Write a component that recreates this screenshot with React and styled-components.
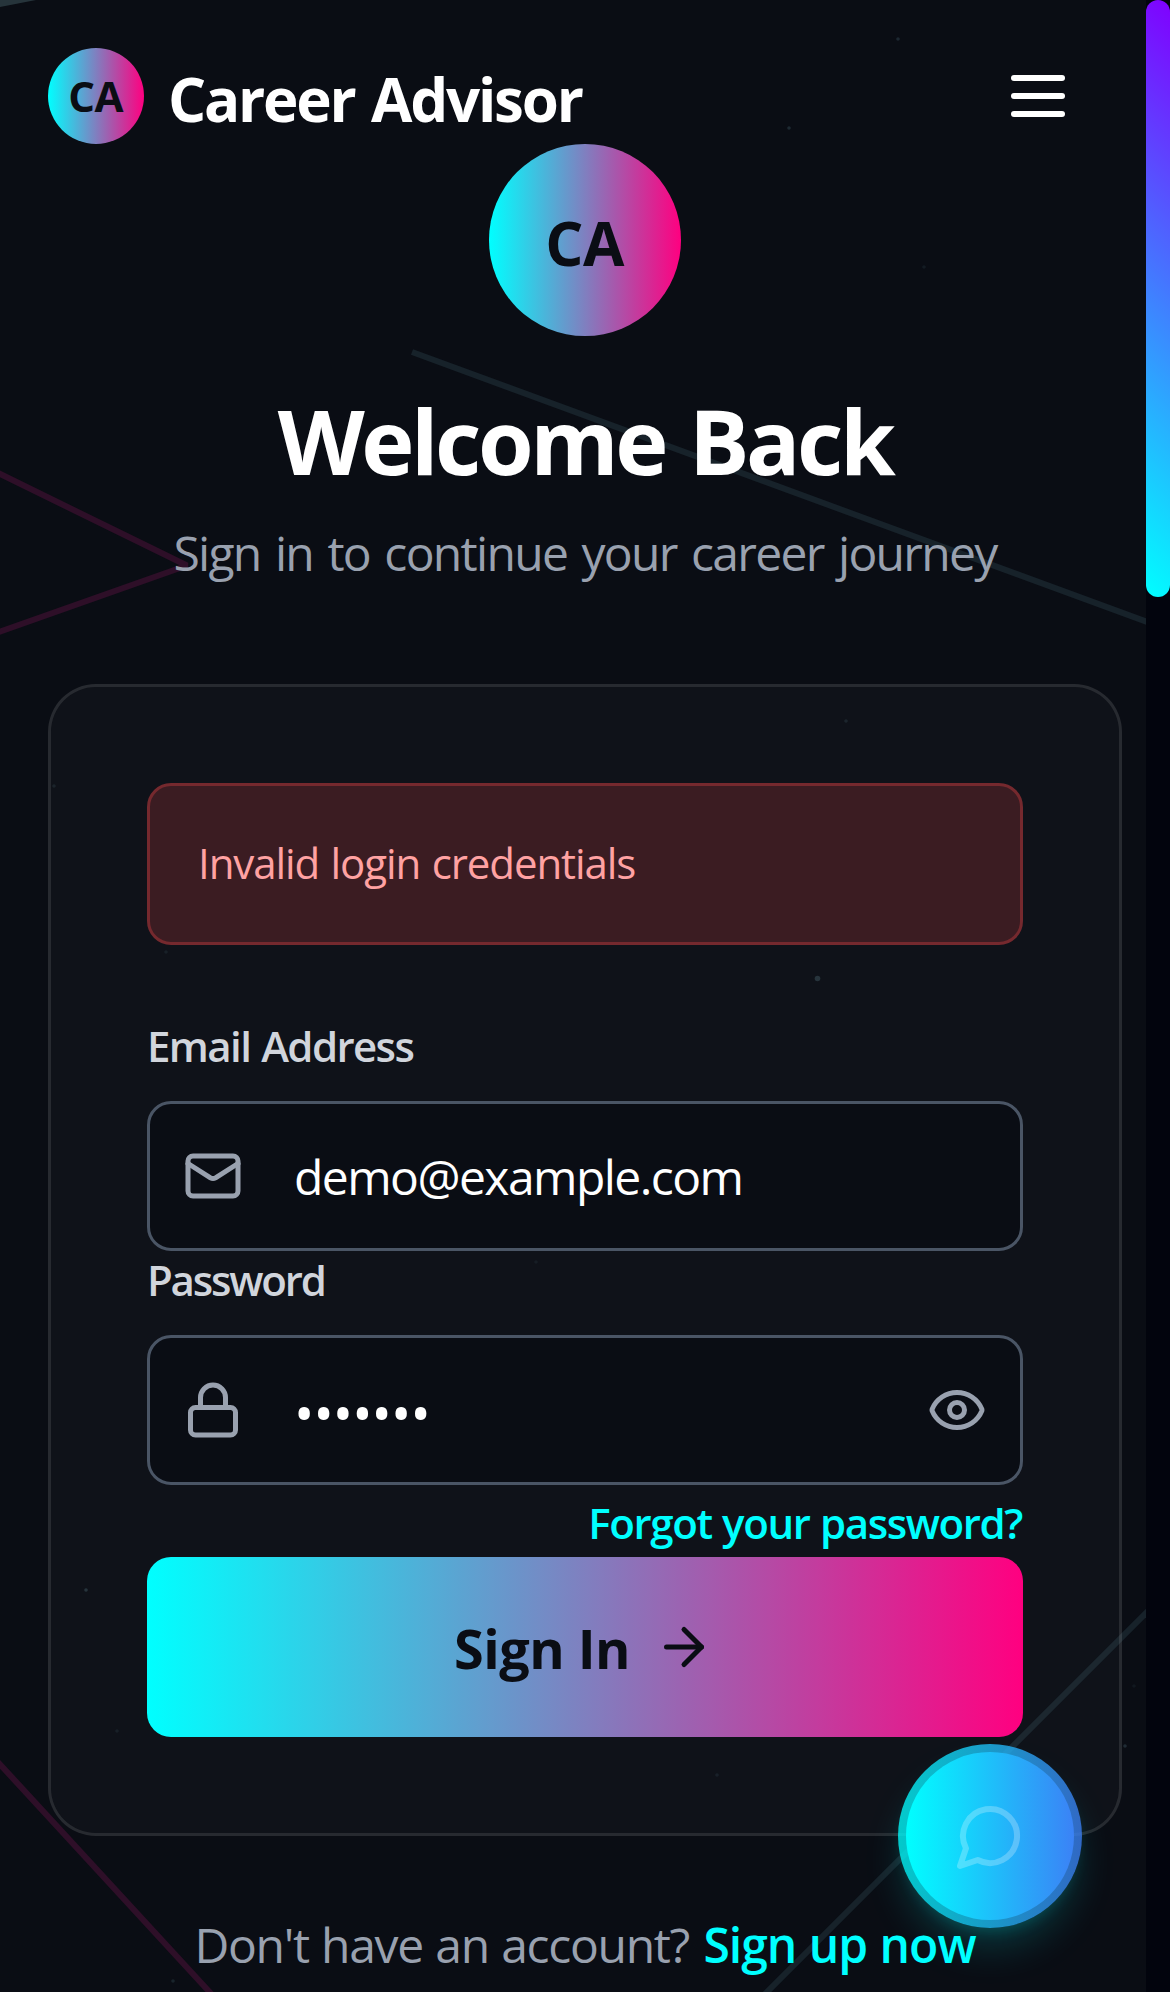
import React from "react";
import styled, { createGlobalStyle, css } from "styled-components";
import { Mail, Lock, Eye, ArrowRight } from "lucide-react";

const Global = createGlobalStyle`
  *, *::before, *::after { box-sizing: border-box; }
  html, body { margin: 0; background: #0a0d14; }
  body { overflow: hidden; font-family: "Open Sans", "Noto Sans", sans-serif; }
`;

const accent = "linear-gradient(90deg, #00ffff, #ff0080)";

const Page = styled.div`
  position: relative;
  display: flex;
  width: 1170px;
  height: 1992px;
  overflow: hidden;
  background: #0a0d14;
`;

const Backdrop = styled.svg`
  position: absolute;
  inset: 0;
  pointer-events: none;
`;

const Main = styled.div`
  position: relative;
  width: 1146px;
  flex: none;
  padding: 48px 24px 0 48px;
  display: flex;
  flex-direction: column;
  white-space: nowrap;
`;

const Header = styled.header`
  height: 96px;
  flex: none;
  display: flex;
  align-items: center;
  justify-content: space-between;
  padding-right: 57px;
`;

const Brand = styled.div`
  display: flex;
  align-items: center;
  gap: 24px;
`;

const Badge = styled.div`
  width: ${(p) => p.$size}px;
  height: ${(p) => p.$size}px;
  border-radius: 50%;
  background: ${accent};
  display: flex;
  align-items: center;
  justify-content: center;
`;

/* One line of text: size, weight, tracking, and a line box that fixes its baseline. */
const type = css`
  font-size: ${(p) => p.$size}px;
  font-weight: ${(p) => p.$weight || 400};
  letter-spacing: ${(p) => p.$track || 0}px;
  word-spacing: ${(p) => p.$words || 0}px;
  line-height: ${(p) => p.$line}px;
`;

const Initials = styled.span`
  ${type}
  color: #0a0d14;
  padding-top: ${(p) => p.$drop || 0}px;
  margin-left: -1px;
`;

const BrandName = styled.span`
  ${type}
  color: #fff;
  padding-top: 5px;
`;

const MenuButton = styled.button`
  width: 54px;
  padding: 0;
  border: 0;
  background: none;
  display: flex;
  flex-direction: column;
  gap: 12px;
`;

const MenuBar = styled.span`
  height: 6px;
  border-radius: 3px;
  background: #fff;
`;

const Intro = styled.section`
  width: 1074px;
  height: 540px;
  flex: none;
  display: flex;
  flex-direction: column;
  align-items: center;
`;

const Heading = styled.h1`
  ${type}
  margin: 50px 0 0;
  color: #fff;
`;

const Subtitle = styled.p`
  ${type}
  margin: 23px 0 0;
  color: #99a1af;
`;

const Card = styled.form`
  width: 1074px;
  height: 1152px;
  flex: none;
  padding: 96px;
  border: 3px solid rgba(255, 255, 255, 0.12);
  border-radius: 48px;
  background: rgba(255, 255, 255, 0.025);
  background-clip: padding-box;
  display: flex;
  flex-direction: column;
`;

const Alert = styled.div`
  ${type}
  height: 162px;
  flex: none;
  margin-bottom: 72px;
  padding: 0 48px 2px;
  border: 3px solid #75292e;
  border-radius: 24px;
  background: #3b1c22;
  color: #ffa2a2;
  display: flex;
  align-items: center;
`;

const Label = styled.label`
  ${type}
  height: 84px;
  color: #d1d5dc;
`;

const Field = styled.div`
  height: 150px;
  flex: none;
  padding: 0 33px;
  border: 3px solid #4a5565;
  border-radius: 24px;
  background: #0a0d14;
  color: #99a1af;
  display: flex;
  align-items: center;
  & > svg { flex: none; }
`;

const Value = styled.span`
  ${type}
  flex: 1;
  margin-left: 51px;
  padding-top: ${(p) => p.$drop || 0}px;
  color: #fff;
`;

const Forgot = styled.a`
  ${type}
  height: 72px;
  align-self: flex-end;
  padding-right: 1px;
  color: #00ffff;
`;

const Submit = styled.button`
  height: 180px;
  flex: none;
  padding: 0 2px 0 0;
  border: 0;
  border-radius: 24px;
  background: ${accent};
  color: #0a0d14;
  font-family: inherit;
  display: flex;
  align-items: center;
  justify-content: center;
  gap: 24px;
`;

const SubmitText = styled.span`
  ${type}
  padding-top: 2px;
`;

const Footer = styled.p`
  ${type}
  width: 1074px;
  margin: 73px 0 0;
  color: #99a1af;
  text-align: center;
`;

const SignUp = styled.a`
  ${type}
  margin-left: 2px;
  color: #00ffff;
`;

const ChatRing = styled.div`
  position: absolute;
  left: 898px;
  top: 1744px;
  width: 184px;
  height: 184px;
  border-radius: 50%;
  display: flex;
  align-items: center;
  justify-content: center;
  background: linear-gradient(90deg, rgba(0, 255, 255, 0.78), rgba(59, 130, 246, 0.78));
  box-shadow: 0 24px 44px -10px rgba(0, 255, 255, 0.22), 0 8px 18px -10px rgba(0, 255, 255, 0.25);
`;

const ChatButton = styled.button`
  width: 168px;
  height: 168px;
  padding: 0;
  border: 0;
  border-radius: 50%;
  background: linear-gradient(90deg, #00ffff, #3b82f6);
  display: flex;
  align-items: center;
  justify-content: center;
`;

const Track = styled.div`
  position: relative;
  width: 24px;
  flex: none;
  background: #02040d;
`;

const Thumb = styled.div`
  height: 597px;
  border-radius: 12px;
  background: linear-gradient(45deg, #00ffff, #8000ff);
`;

const stars = [
  [898, 39, 0.14], [789, 128, 0.15], [924, 267, 0.07], [54, 786, 0.09], [157, 933, 0.1],
  [166, 952, 0.07], [846, 721, 0.1], [817.5, 978.5, 0.18], [707, 1127, 0.1], [536, 1262, 0.06],
  [86, 1590, 0.18], [117, 1731, 0.07], [173, 1981, 0.12], [717, 1775, 0.08], [1134, 1686, 0.06],
  [1125, 1746, 0.16],
];

export default function App() {
  return (
    <>
      <Global />
      <Page>
        <Backdrop width="1146" height="1992" viewBox="0 0 1146 1992" fill="none">
          <path d="M0 0H36L0 7Z" fill="#26343b" />
          <g strokeWidth="6">
            <path d="M412 352 1150 623" stroke="#17222a" />
            <path d="M-4 472 187 565.5 -4 633" stroke="#2e0f28" strokeLinejoin="bevel" />
            <path d="M-4 1760 216 1999" stroke="#2e0f28" />
            <path d="M1150 1609 760 1999" stroke="#17222a" />
          </g>
          {stars.map(([x, y, o]) => (
            <circle key={`${x}-${y}`} cx={x} cy={y} r={x === 817.5 ? 2.8 : 1.8} fill="#8fd0e0" fillOpacity={o} />
          ))}
        </Backdrop>

        <Main>
          <Header>
            <Brand>
              <Badge $size={96}>
                <Initials $size={42} $weight={700} $line={60} $track={-0.6}>CA</Initials>
              </Badge>
              <BrandName $size={60} $weight={700} $line={84} $track={-2.2} $words={3}>Career Advisor</BrandName>
            </Brand>
            <MenuButton aria-label="Menu">
              <MenuBar />
              <MenuBar />
              <MenuBar />
            </MenuButton>
          </Header>

          <Intro>
            <Badge $size={192}>
              <Initials $size={60} $weight={700} $line={84} $track={-0.6} $drop={5}>CA</Initials>
            </Badge>
            <Heading $size={90} $weight={700} $line={108} $track={-3.4} $words={4}>Welcome Back</Heading>
            <Subtitle $size={48} $line={72} $track={-1.7} $words={3.6}>Sign in to continue your career journey</Subtitle>
          </Intro>

          <Card onSubmit={(e) => e.preventDefault()}>
            <Alert $size={42} $line={60} $track={-1.1} $words={1.8}>Invalid login credentials</Alert>

            <Label $size={42} $weight={600} $line={58} $track={-1.6} $words={1.6}>Email Address</Label>
            <Field>
              <Mail size={60} strokeWidth={2} />
              <Value $size={48} $line={72} $track={-1.55} $drop={1}>demo@example.com</Value>
            </Field>

            <Label $size={42} $weight={600} $line={58} $track={-2.2}>Password</Label>
            <Field>
              <Lock size={60} strokeWidth={2} />
              <Value $size={54} $line={72} $track={-0.9} $drop={5}>•••••••</Value>
              <Eye size={60} strokeWidth={2} />
            </Field>

            <Forgot $size={42} $weight={600} $line={76} $track={-1.4} $words={1}>Forgot your password?</Forgot>
            <Submit type="submit">
              <SubmitText $size={54} $weight={700} $line={84} $track={-0.5}>Sign In</SubmitText>
              <ArrowRight size={60} strokeWidth={2} />
            </Submit>
          </Card>

          <Footer $size={48} $line={72} $track={-1.3} $words={1.2}>
            Don't have an account? <SignUp $size={48} $weight={600} $line={72} $track={-1} $words={1}>Sign up now</SignUp>
          </Footer>
        </Main>

        <Track>
          <Thumb />
        </Track>

        <ChatRing>
          <ChatButton aria-label="Chat">
            <svg width="72" height="72" viewBox="0 0 24 24" fill="none" stroke="#fff" strokeOpacity="0.25" strokeWidth="2" strokeLinecap="round" strokeLinejoin="round">
              <path d="M7.9 20A9 9 0 1 0 4 16.1L2 22Z" />
            </svg>
          </ChatButton>
        </ChatRing>
      </Page>
    </>
  );
}
